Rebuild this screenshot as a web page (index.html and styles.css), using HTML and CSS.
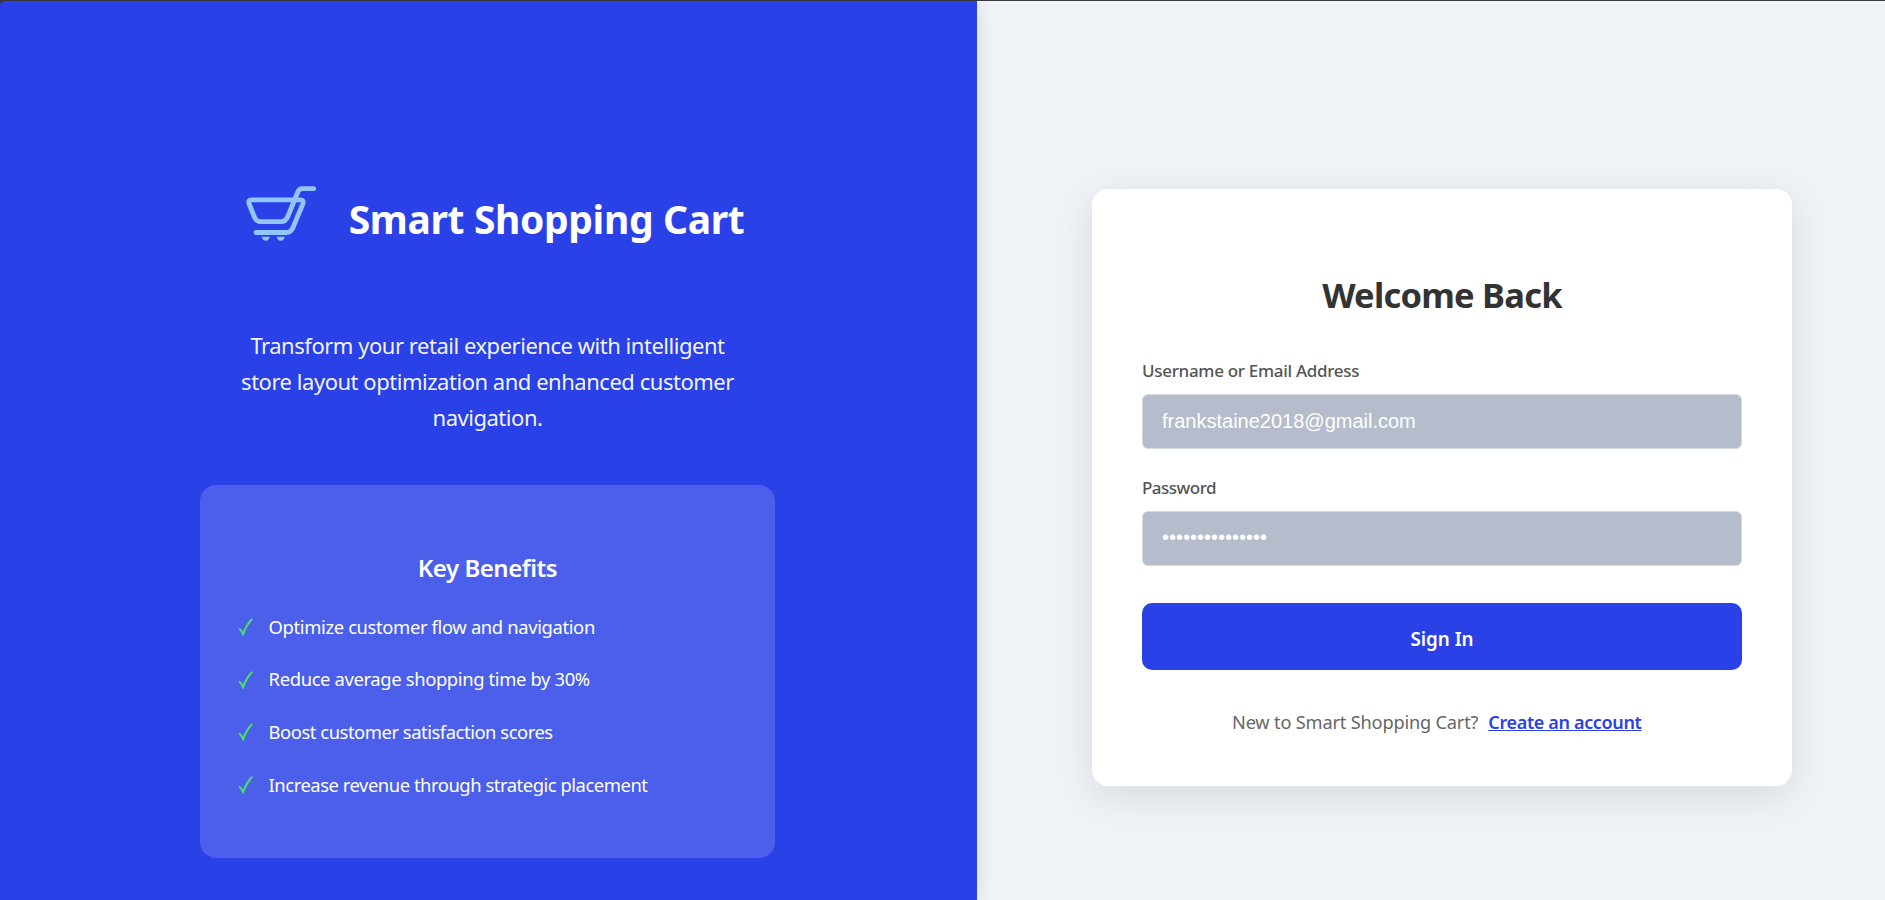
FILE: index.html
```html
<!DOCTYPE html>
<html lang="en">
<head>
<meta charset="utf-8">
<title>Smart Shopping Cart</title>
<link rel="stylesheet" href="styles.css">
</head>
<body>
<div class="page">
  <section class="intro">
    <header class="brand">
      <svg class="brand-icon" viewBox="0 0 96 96" fill="none">
        <g stroke="#93c5fd" stroke-width="4.8" stroke-linecap="round" stroke-linejoin="round">
          <path d="M82.8 18.7H71.5Q68 18.7 66.6 22.5L56.8 46.5Q54.6 51.7 49.5 51.7H30Q25.6 51.7 23.6 47.5L18.2 34Q16.6 29.8 20.5 29.8H69.3Q73.2 29.8 71.8 34L62 57.5Q60 62.5 55.5 62.5H25"/>
        </g>
        <path fill="#93c5fd" d="M30.8 66.7h8q-.8 4.1-4 4.1t-4-4.1zM45.7 66.7h8q-.8 4.1-4 4.1t-4-4.1z"/>
      </svg>
      <h1 class="brand-name">Smart Shopping Cart</h1>
    </header>
    <p class="tagline">Transform your retail experience with intelligent store layout optimization and enhanced customer navigation.</p>
    <div class="benefits">
      <h2 class="benefits-title">Key Benefits</h2>
      <ul class="benefits-list">
        <li><svg class="check" viewBox="0 0 15 18"><path d="M.9 10.6Q3.4 11.6 5.1 16.2Q8.6 6.4 14.3 .8"/></svg><span>Optimize customer flow and navigation</span></li>
        <li><svg class="check" viewBox="0 0 15 18"><path d="M.9 10.6Q3.4 11.6 5.1 16.2Q8.6 6.4 14.3 .8"/></svg><span>Reduce average shopping time by 30%</span></li>
        <li><svg class="check" viewBox="0 0 15 18"><path d="M.9 10.6Q3.4 11.6 5.1 16.2Q8.6 6.4 14.3 .8"/></svg><span class="tight">Boost customer satisfaction scores</span></li>
        <li><svg class="check" viewBox="0 0 15 18"><path d="M.9 10.6Q3.4 11.6 5.1 16.2Q8.6 6.4 14.3 .8"/></svg><span class="tight">Increase revenue through strategic placement</span></li>
      </ul>
    </div>
  </section>
  <main class="auth">
    <form class="card">
      <h2 class="card-title">Welcome Back</h2>
      <label class="label" for="user">Username or Email Address</label>
      <input class="field" id="user" type="text" value="frankstaine2018@gmail.com">
      <label class="label label-short" for="pass">Password</label>
      <input class="field secret" id="pass" type="text" value="•••••••••••••••">
      <button class="submit" type="button">Sign In</button>
      <p class="signup"><span>New to Smart Shopping Cart?</span><a class="signup-link" href="#">Create an account</a></p>
    </form>
  </main>
</div>
</body>
</html>
```
FILE: styles.css
```css
* { box-sizing: border-box; }
body {
  margin: 0;
  background: #3a3a40;
  font-family: "Noto Sans", sans-serif;
}
h1, h2, p, ul { margin: 0; padding: 0; }
.page {
  display: flex;
  height: 900px;
  padding-top: 1px;
  overflow: hidden;
}
.intro {
  position: relative;
  z-index: 1;
  flex: 0 0 977px;
  display: flex;
  flex-direction: column;
  align-items: center;
  padding: 169px 2px 0 0;
  background: #2a41e8;
  color: #fff;
  border-top-left-radius: 7px 4px;
  box-shadow: 0 0 20px rgba(0, 0, 0, 0.1);
}
.brand {
  display: flex;
  align-items: center;
  gap: 22px;
}
.brand-icon { width: 96px; height: 96px; }
.brand-name {
  padding-top: 1px;
  font-size: 39px;
  line-height: 60px;
  font-weight: 700;
  letter-spacing: -0.36px;
}
.tagline {
  width: 510px;
  margin-top: 61px;
  font-size: 22px;
  line-height: 36px;
  letter-spacing: -0.47px;
  text-align: center;
  color: rgba(255, 255, 255, 0.96);
}
.benefits {
  width: 575px;
  height: 373px;
  margin-top: 50px;
  padding: 63px 38px 0;
  border-radius: 16px;
  background: #4b5fea;
}
.benefits-title {
  font-size: 24px;
  line-height: 40px;
  font-weight: 600;
  letter-spacing: -0.46px;
  text-align: center;
}
.benefits-list {
  margin-top: 12.5px;
  list-style: none;
}
.benefits-list li {
  display: flex;
  align-items: center;
  gap: 15.6px;
  height: 52.7px;
  font-size: 18.4px;
  line-height: 52.7px;
  letter-spacing: -0.36px;
  white-space: nowrap;
}
.benefits-list .tight { letter-spacing: -0.46px; }
.check {
  width: 15px;
  height: 18px;
  fill: none;
  stroke: #4ade6a;
  stroke-width: 2;
}
.auth {
  flex: 1;
  padding: 188px 0 0 115px;
  background: #eff3f8;
}
.card {
  display: flex;
  flex-direction: column;
  width: 700px;
  height: 597px;
  padding: 81px 50px 0;
  border-radius: 16px;
  background: #fff;
  box-shadow: 0 10px 40px rgba(0, 0, 0, 0.1);
}
.card-title {
  margin-bottom: 37px;
  font-size: 34.5px;
  line-height: 50px;
  font-weight: 700;
  letter-spacing: -0.78px;
  text-align: center;
  color: #333;
}
.label {
  margin-bottom: 10px;
  font-size: 17px;
  line-height: 27px;
  font-weight: 500;
  letter-spacing: -0.3px;
  color: #555;
}
.label-short { letter-spacing: -0.5px; }
.field {
  width: 100%;
  height: 55px;
  margin: 0 0 25px;
  padding: 0 18px 0 19px;
  border: 1px solid #d5dae3;
  border-radius: 6px;
  outline: 0;
  background: #b5bccb;
  color: #fff;
  font-family: "Liberation Sans", Arial, sans-serif;
  font-size: 20px;
}
.secret {
  margin-bottom: 37px;
  padding-bottom: 2px;
}
.submit {
  height: 67px;
  padding: 5px 0 0;
  border: 0;
  border-radius: 10px;
  background: #2a41e8;
  color: #fff;
  font-family: inherit;
  font-size: 18.8px;
  font-weight: 600;
}
.signup {
  display: flex;
  gap: 10px;
  margin: 37px 0 0 90px;
  font-size: 18.2px;
  line-height: 30px;
  letter-spacing: -0.18px;
  color: #666;
}
.signup-link {
  font-size: 18px;
  font-weight: 600;
  letter-spacing: -0.35px;
  color: #2a41e8;
}
```
